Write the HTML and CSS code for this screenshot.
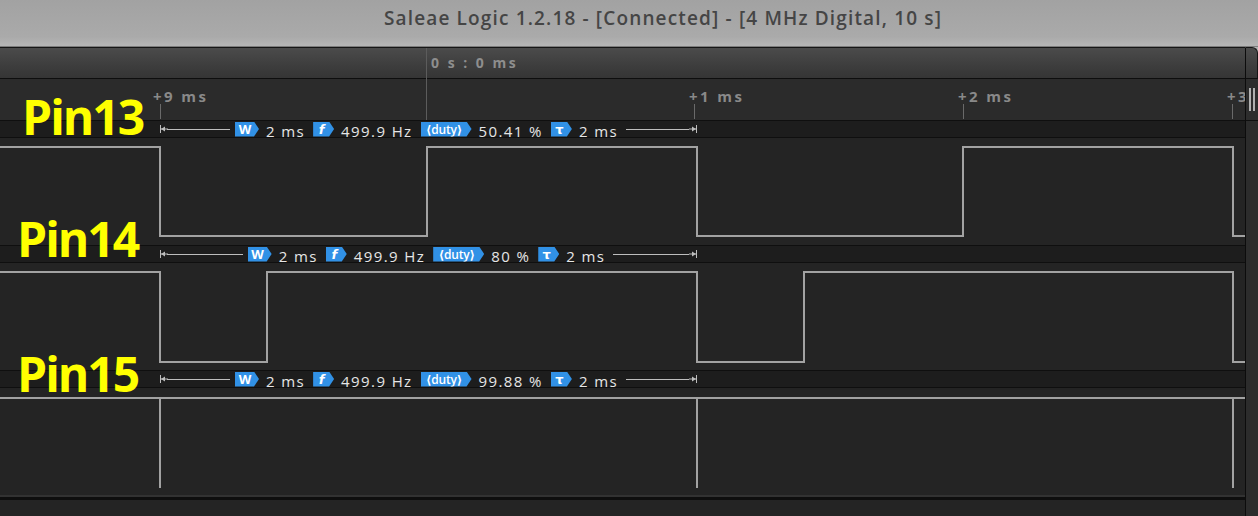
FILE: index.html
```html
<!DOCTYPE html>
<html>
<head>
<meta charset="utf-8">
<title>Saleae Logic</title>
<link rel="stylesheet" href="styles.css">
</head>
<body>
<div class="title">Saleae Logic 1.2.18 - [Connected] - [4 MHz Digital, 10 s]</div>
<div class="app">
  <div class="main">
    <div class="header"><span class="t0">0 s : 0 ms</span></div>
    <div class="ruler">
      <span class="tlabel" style="left:153px">+9 ms</span><span class="tick" style="left:160px"></span>
      <span class="tlabel" style="left:689px">+1 ms</span><span class="tick" style="left:694px"></span>
      <span class="tlabel" style="left:958px">+2 ms</span><span class="tick" style="left:963px"></span>
      <span class="tlabel" style="left:1227px">+3 ms</span><span class="tick" style="left:1232px"></span>
    </div>

    <div class="channel">
      <div class="bar">
        <div class="meas">
          <svg class="cap" width="8" height="10" viewBox="0 0 8 10"><path d="M0.5 1V9" stroke="#bdbdbd"/><path d="M1 5H8" stroke="#bdbdbd"/><path d="M1 5L5 2.5V7.5Z" fill="#bdbdbd"/></svg>
          <span class="ln"></span>
          <span class="badge b-w">W</span><span class="val">2 ms</span>
          <span class="badge b-f">f</span><span class="val">499.9 Hz</span>
          <span class="badge b-d">⟨duty⟩</span><span class="val">50.41 %</span>
          <span class="badge b-t">τ</span><span class="val">2 ms</span>
          <span class="ln"></span>
          <svg class="cap" width="8" height="10" viewBox="0 0 8 10"><path d="M7.5 1V9" stroke="#bdbdbd"/><path d="M0 5H7" stroke="#bdbdbd"/><path d="M7 5L3 2.5V7.5Z" fill="#bdbdbd"/></svg>
        </div>
      </div>
      <svg class="wave" viewBox="0 0 1245 107" width="1245" height="107"><path d="M0 9H160V98H427V9H697V98H963V9H1233V98H1245" /></svg>
    </div>

    <div class="channel">
      <div class="bar">
        <div class="meas">
          <svg class="cap" width="8" height="10" viewBox="0 0 8 10"><path d="M0.5 1V9" stroke="#bdbdbd"/><path d="M1 5H8" stroke="#bdbdbd"/><path d="M1 5L5 2.5V7.5Z" fill="#bdbdbd"/></svg>
          <span class="ln"></span>
          <span class="badge b-w">W</span><span class="val">2 ms</span>
          <span class="badge b-f">f</span><span class="val">499.9 Hz</span>
          <span class="badge b-d">⟨duty⟩</span><span class="val">80 %</span>
          <span class="badge b-t">τ</span><span class="val">2 ms</span>
          <span class="ln"></span>
          <svg class="cap" width="8" height="10" viewBox="0 0 8 10"><path d="M7.5 1V9" stroke="#bdbdbd"/><path d="M0 5H7" stroke="#bdbdbd"/><path d="M7 5L3 2.5V7.5Z" fill="#bdbdbd"/></svg>
        </div>
      </div>
      <svg class="wave" viewBox="0 0 1245 107" width="1245" height="107"><path d="M0 9H160V99H267V9H697V99H804V9H1233V99H1245" /></svg>
    </div>

    <div class="channel">
      <div class="bar">
        <div class="meas">
          <svg class="cap" width="8" height="10" viewBox="0 0 8 10"><path d="M0.5 1V9" stroke="#bdbdbd"/><path d="M1 5H8" stroke="#bdbdbd"/><path d="M1 5L5 2.5V7.5Z" fill="#bdbdbd"/></svg>
          <span class="ln"></span>
          <span class="badge b-w">W</span><span class="val">2 ms</span>
          <span class="badge b-f">f</span><span class="val">499.9 Hz</span>
          <span class="badge b-d">⟨duty⟩</span><span class="val">99.88 %</span>
          <span class="badge b-t">τ</span><span class="val">2 ms</span>
          <span class="ln"></span>
          <svg class="cap" width="8" height="10" viewBox="0 0 8 10"><path d="M7.5 1V9" stroke="#bdbdbd"/><path d="M0 5H7" stroke="#bdbdbd"/><path d="M7 5L3 2.5V7.5Z" fill="#bdbdbd"/></svg>
        </div>
      </div>
      <svg class="wave" viewBox="0 0 1245 107" width="1245" height="107"><path d="M0 10H1245M160 10V100M697 10V100M1233 10V100" /></svg>
    </div>

    <div class="footer"></div>

    <span class="marker"></span>
    <span class="pin pin13">Pin13</span>
    <span class="pin pin14">Pin14</span>
    <span class="pin pin15">Pin15</span>
  </div>
  <div class="vscroll">
    <div class="vs-head"></div>
    <div class="vs-ruler"><span class="grip"></span></div>
    <div class="vs-body"></div>
  </div>
</div>
</body>
</html>
```

FILE: styles.css
```css
* { box-sizing: border-box; }
html, body { margin: 0; padding: 0; }
body {
  width: 1258px;
  height: 516px;
  overflow: hidden;
  background: #232323;
  font-family: "Open Sans", "DejaVu Sans", sans-serif;
}
.title {
  height: 47px;
  padding-left: 68px;
  background: linear-gradient(#a2a2a2, #aaaaaa 80%, #b6b6b6);
  border-bottom: 1px solid #7c7c7c;
  text-align: center;
  line-height: 36px;
  font-size: 19px;
  font-weight: 600;
  color: #454545;
  letter-spacing: 1.15px;
}
.app {
  display: flex;
  height: 469px;
  background: #b4b4b4;
}
.main {
  position: relative;
  width: 1245px;
  display: flex;
  flex-direction: column;
  background: #242424;
}
.header {
  height: 32px;
  border-top: 1px solid #161616;
  border-bottom: 1px solid #0e0e0e;
  background: linear-gradient(#4b4b4b, #3d3d3d 60%, #353535);
  position: relative;
}
.t0 {
  position: absolute;
  left: 431px;
  top: 5px;
  font-size: 14px;
  font-weight: 700;
  letter-spacing: 2.5px;
  color: #8e8e8e;
}
.ruler {
  height: 41px;
  background: #2b2b2b;
  position: relative;
  overflow: hidden;
}
.tlabel {
  position: absolute;
  top: 7px;
  font-size: 15px;
  font-weight: 700;
  letter-spacing: 2.4px;
  color: #898989;
  white-space: nowrap;
}
.tick {
  position: absolute;
  top: 25px;
  width: 1px;
  height: 15px;
  background: #6a6a6a;
}
.channel {
  height: 125px;
  display: flex;
  flex-direction: column;
}
.bar {
  height: 18px;
  background: #1d1d1d;
  border-top: 1px solid #0f0f0f;
  border-bottom: 1px solid #0f0f0f;
  padding-left: 160px;
  display: flex;
  align-items: center;
}
.meas {
  width: 537px;
  display: flex;
  align-items: center;
}
.cap { flex: none; display: block; }
.ln {
  flex: 1;
  height: 1px;
  background: #bdbdbd;
}
.ln:first-of-type { margin-right: 5px; margin-left: -1px; }
.badge {
  flex: none;
  height: 15px;
  display: flex;
  align-items: center;
  justify-content: center;
  padding-right: 4px;
  background: #3191e6;
  color: #fff;
  font-size: 13px;
  font-weight: 700;
  line-height: 15px;
  clip-path: polygon(0 0, calc(100% - 5px) 0, 100% 50%, calc(100% - 5px) 100%, 0 100%);
}
.b-w { width: 24px; }
.b-f { width: 21px; font-style: italic; font-family: "DejaVu Sans", sans-serif; }
.b-d { width: 51px; font-size: 12px; font-weight: 600; letter-spacing: -0.2px; }
.b-t { width: 21px; font-family: "DejaVu Sans", sans-serif; }
.val {
  flex: none;
  margin: 0 8px 0 7px;
  font-size: 15px;
  letter-spacing: 1.4px;
  color: #e6e6e6;
  position: relative;
  top: 2px;
  white-space: nowrap;
}
.val:last-of-type { margin-right: 2px; }
.wave {
  display: block;
  flex: none;
}
.wave path {
  fill: none;
  stroke: #a2a2a2;
  stroke-width: 2;
}
.footer {
  flex: 1;
  border-top: 2px solid #323232;
  background: linear-gradient(#0e0e0e 0, #0e0e0e 3px, #242424 3px);
}
.marker {
  position: absolute;
  left: 426px;
  top: 1px;
  width: 1px;
  height: 72px;
  background: #5c5c5c;
}
.pin {
  position: absolute;
  font-size: 48px;
  line-height: 48px;
  font-weight: 700;
  letter-spacing: -2px;
  color: #ffff00;
  white-space: nowrap;
}
.pin13 { left: 22px; top: 46px; }
.pin14 { left: 17px; top: 168px; }
.pin15 { left: 17px; top: 303px; }
.vscroll {
  width: 13px;
  display: flex;
  flex-direction: column;
}
.vs-head {
  height: 32px;
  border-top: 1px solid #161616;
  border-left: 1px solid #0c0c0c;
  border-right: 1px solid #161616;
  border-bottom: 1px solid #0e0e0e;
  border-top-right-radius: 6px;
  background: linear-gradient(#4b4b4b, #3d3d3d 60%, #353535);
}
.vs-ruler {
  height: 41px;
  background: #2d2d2d;
  border-left: 1px solid #0c0c0c;
  position: relative;
}
.grip {
  position: absolute;
  left: 3px;
  top: 9px;
  width: 6px;
  height: 23px;
  border-left: 2px solid #b0b0b0;
  border-right: 2px solid #b0b0b0;
}
.vs-body {
  flex: 1;
  background: #2c2c2c;
  border-left: 1px solid #0c0c0c;
  border-top: 1px solid #0f0f0f;
}
```
